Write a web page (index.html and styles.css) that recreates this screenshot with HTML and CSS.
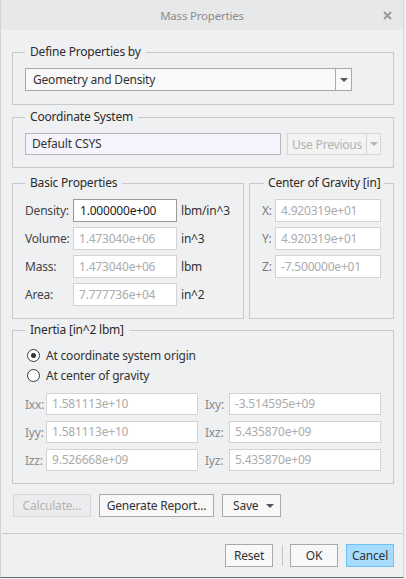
FILE: index.html
```html
<!DOCTYPE html>
<html lang="en">
<head>
    <meta charset="UTF-8">
    <title>Mass Properties</title>
    <link rel="stylesheet" href="styles.css">
</head>
<body>
    <div class="dialog">
        <!-- Title bar -->
        <div class="titlebar">
            <span class="title">Mass Properties</span>
            <svg class="close" width="9" height="9" viewBox="0 0 9 9">
                <path d="M1 1 L8 8 M8 1 L1 8" stroke="#9a9a9a" stroke-width="2"/>
            </svg>
        </div>

        <div class="content">
            <!-- Define Properties by -->
            <div class="group group-define">
                <div class="group-title">Define Properties by</div>
                <div class="select">
                    <span class="select-text">Geometry and Density</span>
                    <span class="select-arrow"><span class="tri"></span></span>
                </div>
            </div>

            <!-- Coordinate System -->
            <div class="group group-csys">
                <div class="group-title">Coordinate System</div>
                <div class="csys-row">
                    <div class="field csys-field">Default CSYS</div>
                    <div class="split-btn disabled">
                        <span class="split-text">Use Previous</span>
                        <span class="split-arrow"><span class="tri light"></span></span>
                    </div>
                </div>
            </div>

            <!-- Basic Properties + Center of Gravity -->
            <div class="pair">
                <div class="group group-basic">
                    <div class="group-title">Basic Properties</div>
                    <div class="prop-row">
                        <span class="prop-label">Density:</span>
                        <div class="field prop-field active">1.000000e+00</div>
                        <span class="unit">lbm/in^3</span>
                    </div>
                    <div class="prop-row">
                        <span class="prop-label">Volume:</span>
                        <div class="field prop-field">1.473040e+06</div>
                        <span class="unit">in^3</span>
                    </div>
                    <div class="prop-row">
                        <span class="prop-label">Mass:</span>
                        <div class="field prop-field">1.473040e+06</div>
                        <span class="unit">lbm</span>
                    </div>
                    <div class="prop-row">
                        <span class="prop-label">Area:</span>
                        <div class="field prop-field">7.777736e+04</div>
                        <span class="unit">in^2</span>
                    </div>
                </div>

                <div class="group group-cog">
                    <div class="group-title">Center of Gravity [in]</div>
                    <div class="prop-row">
                        <span class="axis-label">X:</span>
                        <div class="field cog-field">4.920319e+01</div>
                    </div>
                    <div class="prop-row">
                        <span class="axis-label">Y:</span>
                        <div class="field cog-field">4.920319e+01</div>
                    </div>
                    <div class="prop-row">
                        <span class="axis-label">Z:</span>
                        <div class="field cog-field">-7.500000e+01</div>
                    </div>
                </div>
            </div>

            <!-- Inertia -->
            <div class="group group-inertia">
                <div class="group-title">Inertia [in^2 lbm]</div>
                <div class="radio-row first">
                    <span class="radio checked"></span>
                    <span>At coordinate system origin</span>
                </div>
                <div class="radio-row">
                    <span class="radio"></span>
                    <span>At center of gravity</span>
                </div>
                <div class="inertia-grid">
                    <span class="in-label">Ixx:</span>
                    <div class="field in-field">1.581113e+10</div>
                    <span class="in-label second">Ixy:</span>
                    <div class="field in-field">-3.514595e+09</div>

                    <span class="in-label">Iyy:</span>
                    <div class="field in-field">1.581113e+10</div>
                    <span class="in-label second">Ixz:</span>
                    <div class="field in-field">5.435870e+09</div>

                    <span class="in-label">Izz:</span>
                    <div class="field in-field">9.526668e+09</div>
                    <span class="in-label second">Iyz:</span>
                    <div class="field in-field">5.435870e+09</div>
                </div>
            </div>

            <!-- Action buttons -->
            <div class="actions">
                <button class="btn btn-calc" disabled>Calculate...</button>
                <button class="btn btn-report">Generate Report...</button>
                <button class="btn btn-save">Save <span class="tri"></span></button>
            </div>
        </div>

        <!-- Footer -->
        <div class="footer">
            <button class="btn btn-foot">Reset</button>
            <span class="foot-sep"></span>
            <button class="btn btn-foot btn-ok">OK</button>
            <button class="btn btn-foot btn-primary">Cancel</button>
        </div>
    </div>
</body>
</html>
```

FILE: styles.css
```css
/* Mass Properties dialog */
body {
    margin: 0;
    background-color: #f0f0f0;
    font-family: 'Noto Sans', 'Liberation Sans', sans-serif;
    font-size: 12px;
    letter-spacing: -0.2px;
    color: #333333;
}

.dialog {
    width: 402px;
    height: 577px;
    background-color: #eff0f2;
    border-left: 1px solid #d4d4d6;
    border-right: 1px solid #d4d4d6;
    border-bottom: 1px solid #6a6a6a;
    display: flex;
    flex-direction: column;
}

.titlebar {
    height: 30px;
    flex-shrink: 0;
    background-color: #e7e8ea;
    display: flex;
    align-items: center;
    justify-content: center;
    position: relative;
}

.title {
    color: #8c8c8c;
    font-size: 11.5px;
}

.close {
    position: absolute;
    right: 11px;
    top: 11px;
}

.content {
    padding: 0 9px 0 11px;
}

/* Group boxes */
.group {
    border: 1px solid #c9c9cb;
    padding: 0 12px;
}

.group-title {
    display: table;
    white-space: nowrap;
    margin: -9px 0 0 0;
    padding: 0 5px;
    line-height: 16px;
    background-color: #eff0f2;
    color: #2c2c2c;
}

.group-define {
    margin-top: 22px;
    padding-bottom: 13px;
}

.group-define .select {
    margin-top: 8px;
}

.group-csys {
    margin-top: 12px;
    padding-bottom: 12px;
}

.csys-row {
    display: flex;
    gap: 6px;
    margin-top: 8px;
}

.pair {
    display: flex;
    gap: 5px;
    margin-top: 15px;
}

.group-basic {
    width: 232px;
    box-sizing: border-box;
    padding-bottom: 12px;
}

.group-cog {
    flex: none;
    width: 145px;
    box-sizing: border-box;
}

.group-cog .group-title {
    padding: 0 4px;
    margin-left: 2px;
}

.group-inertia {
    margin-top: 11px;
    padding-bottom: 12px;
}

/* Inputs */
.field {
    box-sizing: border-box;
    height: 23px;
    line-height: 21px;
    border: 1px solid #d3d3d5;
    background-color: #ffffff;
    color: #ababab;
    padding: 0 5px;
    white-space: nowrap;
}

.field.active {
    border-color: #9a9a9a;
    color: #1a1a1a;
    padding-left: 6px;
}

.select {
    box-sizing: border-box;
    width: 327px;
    height: 23px;
    border: 1px solid #a9a9a9;
    background-color: #f9f9f9;
    display: flex;
    align-items: center;
}

.select-text {
    flex: 1;
    padding-left: 7px;
}

.select-arrow,
.split-arrow {
    width: 15px;
    height: 100%;
    border-left: 1px solid #a9a9a9;
    display: flex;
    align-items: center;
    justify-content: center;
}

.tri {
    display: inline-block;
    width: 0;
    height: 0;
    border-style: solid;
    border-width: 4px 4px 0 4px;
    border-color: #555555 transparent transparent transparent;
}

.tri.light {
    border-top-color: #b4b4b4;
}

.csys-field {
    width: 256px;
    height: 22px;
    line-height: 20px;
    background-color: #f6f3fd;
    border-color: #b8b8bc;
    color: #333333;
    padding-left: 6px;
}

.split-btn {
    box-sizing: border-box;
    width: 94px;
    height: 22px;
    border: 1px solid #d6d6d8;
    background-color: #f3f3f3;
    display: flex;
    align-items: center;
}

.split-btn .split-text {
    flex: 1;
    color: #b2b2b2;
    padding-left: 4px;
    white-space: nowrap;
}

.split-btn .split-arrow {
    width: 13px;
    border-left-color: #d6d6d8;
}

/* Property rows */
.prop-row {
    display: flex;
    align-items: center;
    margin-top: 5px;
}

.group-title + .prop-row {
    margin-top: 8px;
}

.prop-label {
    width: 48px;
    color: #444444;
}

.prop-field {
    width: 104px;
}

.unit {
    margin-left: 4px;
}

.axis-label {
    width: 13px;
    color: #7a7a7a;
}

.cog-field {
    width: 106px;
}

/* Inertia */
.radio-row {
    display: flex;
    align-items: center;
    height: 20px;
    gap: 6px;
    padding-left: 2px;
}

.radio-row.first {
    margin-top: 7px;
}

.radio {
    box-sizing: border-box;
    width: 13px;
    height: 13px;
    border: 1px solid #3a3a3a;
    border-radius: 50%;
    background-color: #ffffff;
    display: flex;
    align-items: center;
    justify-content: center;
}

.radio.checked::after {
    content: "";
    width: 5px;
    height: 5px;
    border-radius: 50%;
    background-color: #333333;
}

.inertia-grid {
    display: grid;
    grid-template-columns: 21px 152px 31px 152px;
    row-gap: 6px;
    align-items: center;
    margin-top: 8px;
}

.in-label {
    color: #8a8a8a;
}

.in-label.second {
    padding-left: 7px;
}

.in-field {
    height: 22px;
    line-height: 20px;
}

/* Buttons */
.btn {
    box-sizing: border-box;
    height: 23px;
    font-family: inherit;
    font-size: 12px;
    letter-spacing: inherit;
    color: #333333;
    background-color: #f8f8f8;
    border: 1px solid #a9a9a9;
    padding: 0;
    margin: 0;
}

.actions {
    display: flex;
    gap: 8px;
    margin-top: 10px;
    padding-left: 1px;
}

.btn-calc {
    width: 78px;
    color: #b4b4b4;
    background-color: #ececee;
    border-color: #d6d6d8;
}

.btn-report {
    width: 115px;
}

.btn-save {
    width: 59px;
    display: flex;
    align-items: center;
    justify-content: space-between;
    padding: 0 6px 0 10px;
}

.footer {
    margin: 16px 1px 0 1px;
    border-top: 1px solid #cacacc;
    display: flex;
    align-items: center;
    justify-content: flex-end;
    padding: 10px 8px 0 0;
}

.btn-foot {
    width: 48px;
    height: 23px;
}

.foot-sep {
    width: 1px;
    height: 21px;
    margin: 0 7px 0 9px;
    background-color: #c4c4c6;
}

.btn-primary {
    margin-left: 8px;
    background-color: #a6dcfd;
    border-color: #6fc0f2;
}
```
